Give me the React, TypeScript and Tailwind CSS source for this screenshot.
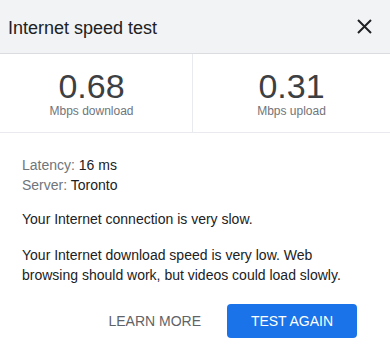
const stats = [
    { value: '0.68', label: 'Mbps download' },
    { value: '0.31', label: 'Mbps upload' },
];

export default function App() {
    return (
        <div className="w-[390px] h-[354px] bg-white font-['Liberation_Sans',Arial,sans-serif] text-[#202124]">
            {/* header */}
            <div className="flex items-center justify-between h-[54px] bg-[#f1f3f4] border-b border-[#dadce0] pl-2 pr-[18px]">
                <h1 className="text-[18px] leading-6 text-[#202124] pt-[3px]">Internet speed test</h1>
                <button className="w-4 h-4 flex items-center justify-center" aria-label="Close">
                    <svg width="15" height="15" viewBox="0 0 15 15">
                        <path d="M1 1L14 14M14 1L1 14" stroke="#202124" strokeWidth="2" />
                    </svg>
                </button>
            </div>

            {/* stats */}
            <div className="flex border-b border-[#e8eaed]">
                {stats.map((s, i) => (
                    <div
                        key={s.label}
                        className={
                            i === 0
                                ? 'w-[193px] border-r border-[#e8eaed] pr-[9px] flex flex-col items-center pt-[15px] pb-[14px]'
                                : 'flex-1 flex flex-col items-center pt-[15px] pb-[14px]'
                        }
                    >
                        <div className="text-[34px] leading-[34px] text-[#3c4043]">{s.value}</div>
                        <div className="text-[12px] leading-[14px] text-[#70757a] mt-[1px]">{s.label}</div>
                    </div>
                ))}
            </div>

            {/* details */}
            <div className="px-[22px] pt-[22px] text-[14px] leading-5">
                <div>
                    <span className="text-[#70757a]">Latency: </span>16 ms
                </div>
                <div>
                    <span className="text-[#70757a]">Server: </span>Toronto
                </div>
                <p className="mt-[14px]">Your Internet connection is very slow.</p>
                <p className="mt-[16px]">
                    Your Internet download speed is very low. Web browsing should work, but videos could load slowly.
                </p>
                <div className="flex justify-end items-center mt-[19px] pr-[11px]">
                    <button className="text-[#5f6368] text-[14px] mr-[26px]">LEARN MORE</button>
                    <button className="w-[130px] h-[34px] rounded bg-[#1a73e8] text-white text-[14px]">TEST AGAIN</button>
                </div>
            </div>
        </div>
    );
}
